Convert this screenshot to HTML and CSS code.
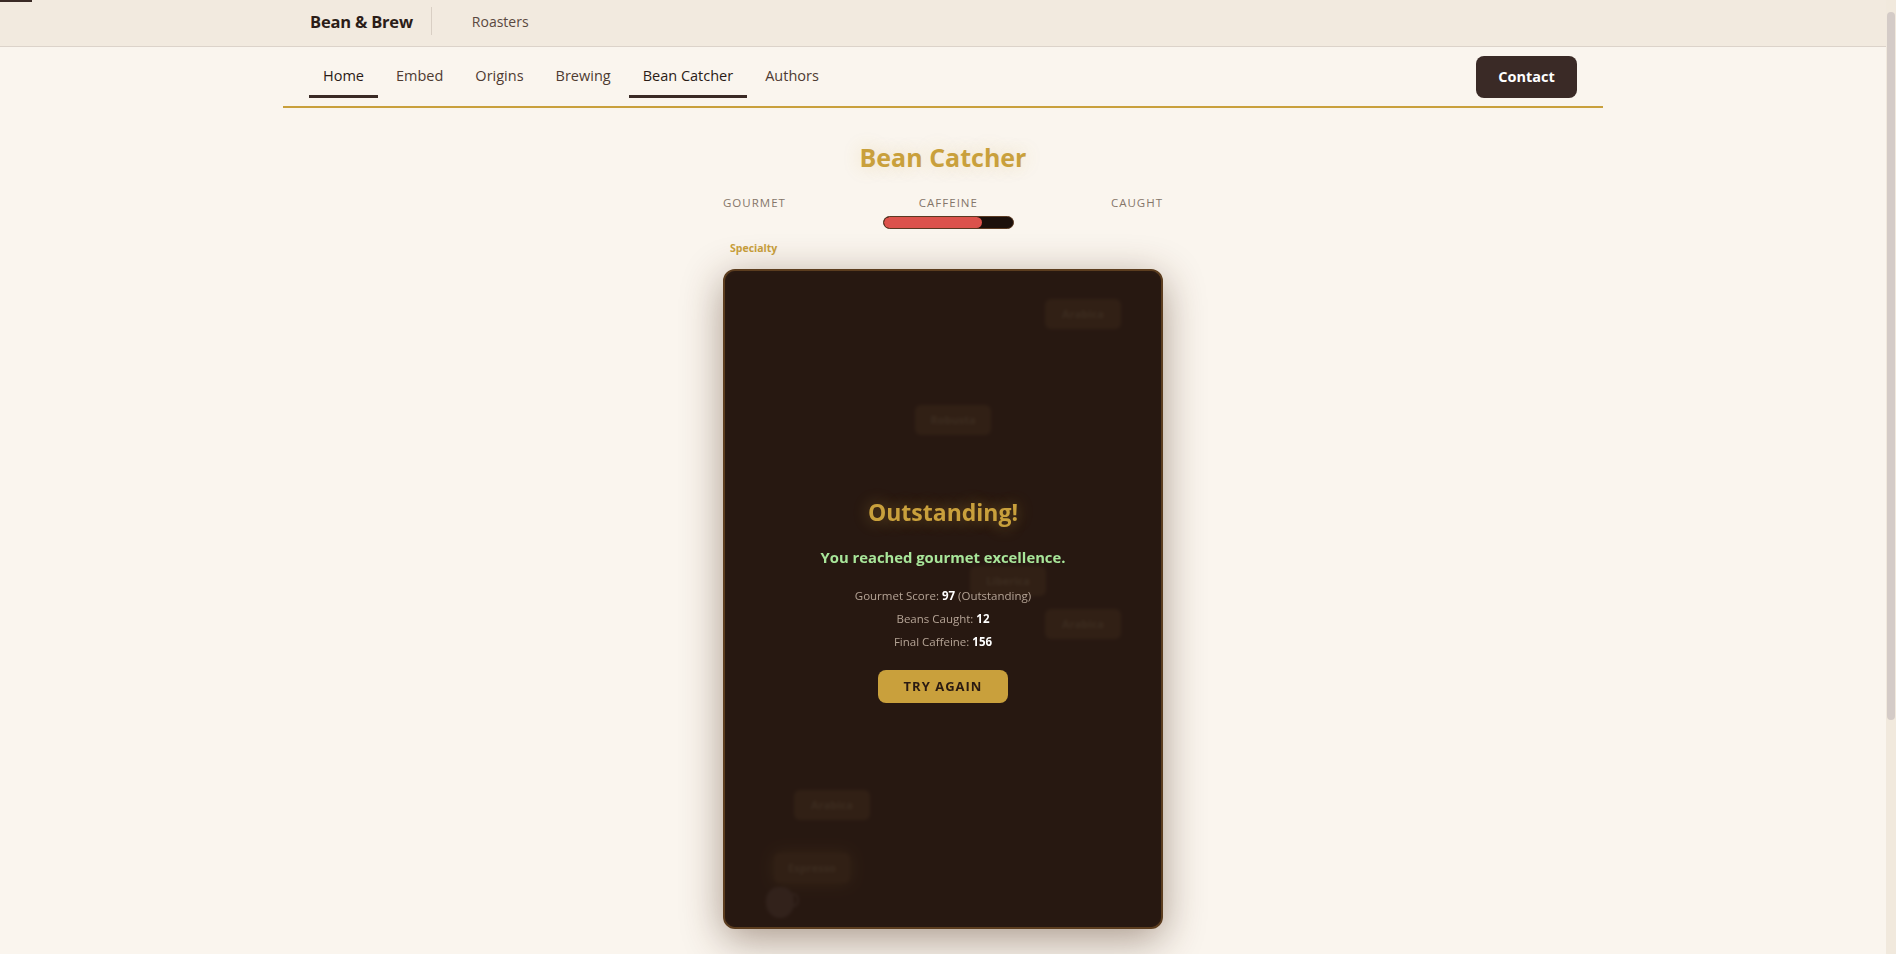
FILE: index.html
```html
<!DOCTYPE html>
<html lang="en">
<head>
    <meta charset="UTF-8">
    <title>Bean Catcher - Bean &amp; Brew</title>
    <link rel="stylesheet" href="styles.css">
</head>
<body>
    <div class="load-bar"></div>
    <div class="scrollbar"><div class="scrollbar-thumb"></div></div>

    <header class="topbar">
        <div class="topbar-inner">
            <span class="brand">Bean &amp; Brew</span>
            <span class="topbar-sep"></span>
            <span class="topbar-link">Roasters</span>
        </div>
    </header>

    <nav class="nav">
        <div class="nav-links">
            <a class="nav-link active">Home</a>
            <a class="nav-link">Embed</a>
            <a class="nav-link">Origins</a>
            <a class="nav-link">Brewing</a>
            <a class="nav-link active">Bean Catcher</a>
            <a class="nav-link">Authors</a>
        </div>
        <button class="contact-btn">Contact</button>
    </nav>

    <main class="game-page">
        <h1 class="game-title">Bean Catcher</h1>

        <div class="stats">
            <div class="stat">
                <div class="stat-label">Gourmet</div>
            </div>
            <div class="stat">
                <div class="stat-label">Caffeine</div>
                <div class="caffeine-bar"><div class="caffeine-fill" style="width: 76%"></div></div>
            </div>
            <div class="stat">
                <div class="stat-label">Caught</div>
            </div>
        </div>
        <div class="rank">Specialty</div>

        <div class="game">
            <div class="bean" style="left: 320px; top: 28px;">Arabica</div>
            <div class="bean" style="left: 190px; top: 134px;">Robusta</div>
            <div class="bean" style="left: 245px; top: 295px;">Liberica</div>
            <div class="bean" style="left: 320px; top: 338px;">Arabica</div>
            <div class="bean" style="left: 69px; top: 519px;">Arabica</div>
            <div class="bean bean-glow" style="left: 49px; top: 582px;">Espresso</div>
            <div class="cup" style="left: 41px; top: 616px;"></div>

            <div class="overlay">
                <h2 class="result-title">Outstanding!</h2>
                <p class="result-msg">You reached gourmet excellence.</p>
                <div class="result-lines">
                    <div>Gourmet Score: <b>97</b> (Outstanding)</div>
                    <div>Beans Caught: <b>12</b></div>
                    <div>Final Caffeine: <b>156</b></div>
                </div>
                <button class="retry-btn">Try Again</button>
            </div>
        </div>
    </main>
</body>
</html>
```

FILE: styles.css
```css
body {
    margin: 0;
    padding-right: 10px;
    font-family: "Open Sans", "Noto Sans", sans-serif;
    background: #faf5ee;
    color: #3a2a25;
}
.load-bar {
    position: fixed;
    top: 0;
    left: 0;
    width: 32px;
    height: 2px;
    background: #3a2a25;
    z-index: 10;
}
/* page scrollbar, drawn since the headless shot hides the native one */
.scrollbar {
    position: fixed;
    top: 0;
    right: 0;
    width: 10px;
    height: 100%;
    background: #f1e9dd;
    z-index: 10;
}
.scrollbar-thumb {
    margin: 12px 1px 0;
    height: 708px;
    border-radius: 4px;
    background: #d4cbc7;
}
.topbar {
    background: #f2eadf;
    border-bottom: 1px solid #dcd3ca;
    height: 46px;
}
.topbar-inner {
    width: 1320px;
    margin: 0 auto;
    height: 100%;
    display: flex;
    align-items: center;
    box-sizing: border-box;
    padding-left: 27px;
    padding-bottom: 4px;
}
.brand {
    font-size: 16.5px;
    font-weight: 700;
    color: #2c1d18;
    letter-spacing: -0.2px;
}
.topbar-sep {
    width: 1px;
    height: 28px;
    background: #d9cfc4;
    margin: 0 20px 0 18px;
}
.topbar-link {
    font-size: 14px;
    color: #5a4840;
    margin-left: 20px;
}
.nav {
    width: 1320px;
    margin: 0 auto;
    height: 61px;
    border-bottom: 2px solid #c9a03c;
    display: flex;
    align-items: center;
    justify-content: space-between;
    padding: 0 26px;
    box-sizing: border-box;
}
.nav-links {
    display: flex;
    gap: 4px;
    align-self: flex-end;
    margin-bottom: 8px;
}
.nav-link {
    padding: 9px 14px;
    line-height: 20px;
    font-size: 14.5px;
    color: #4e3b32;
    border-bottom: 3px solid transparent;
    cursor: pointer;
}
.nav-link.active {
    color: #2a1b16;
    border-bottom-color: #3a2a25;
}
.contact-btn {
    height: 42px;
    width: 101px;
    border: none;
    border-radius: 8px;
    background: #3a2a26;
    color: #fff;
    font-family: inherit;
    font-size: 14.5px;
    font-weight: 700;
}
.game-page {
    width: 440px;
    margin: 0 auto;
    padding-bottom: 360px;
}
.game-title {
    margin: 33px 0 0;
    text-align: center;
    font-size: 25px;
    line-height: 32px;
    font-weight: 700;
    color: #c9a03c;
    text-shadow: 0 0 18px rgba(201, 160, 60, 0.25);
}
.stats {
    display: flex;
    justify-content: space-between;
    margin-top: 22px;
}
.stat {
    display: flex;
    flex-direction: column;
    align-items: center;
}
.stat-label {
    font-size: 11.5px;
    line-height: 16px;
    letter-spacing: 1px;
    text-transform: uppercase;
    color: #85766a;
}
.caffeine-bar {
    width: 131px;
    height: 13px;
    margin-top: 5px;
    box-sizing: border-box;
    border: 1px solid #5a3a22;
    border-radius: 7px;
    background: #1c100b;
    overflow: hidden;
}
.caffeine-fill {
    height: 100%;
    background: #dc524b;
    border-radius: 6px;
}
.rank {
    margin-top: 12px;
    padding-left: 7px;
    font-size: 10.5px;
    line-height: 14px;
    font-weight: 700;
    color: #c9a03c;
}
.game {
    position: relative;
    margin-top: 14px;
    width: 440px;
    height: 660px;
    box-sizing: border-box;
    border: 2px solid #5c3d1f;
    border-radius: 12px;
    background: #281912;
    box-shadow: 0 10px 40px rgba(70, 40, 20, 0.45);
    overflow: hidden;
}
.bean {
    position: absolute;
    width: 76px;
    height: 30px;
    border-radius: 6px;
    background: #6a4e2c;
    color: #b09a70;
    font-size: 11px;
    font-weight: 700;
    line-height: 30px;
    text-align: center;
}
.bean-glow {
    box-shadow: 0 0 16px rgba(201, 160, 60, 0.6);
}
.cup {
    position: absolute;
    width: 28px;
    height: 31px;
    border-radius: 45% 45% 50% 50%;
    background: #6f5c58;
}
.cup::after {
    content: "";
    position: absolute;
    right: -5px;
    top: 6px;
    width: 7px;
    height: 10px;
    border: 2px solid #6f5c58;
    border-radius: 50%;
}
.overlay {
    position: absolute;
    inset: 0;
    background: rgba(40, 25, 18, 0.86);
    backdrop-filter: blur(1.5px);
    display: flex;
    flex-direction: column;
    align-items: center;
    justify-content: center;
    text-align: center;
}
.result-title {
    margin: 0;
    font-size: 23px;
    line-height: 32px;
    font-weight: 700;
    color: #c9a03c;
    text-shadow: 0 0 16px rgba(201, 160, 60, 0.45);
}
.result-msg {
    margin: 19px 0 0;
    font-size: 14.8px;
    line-height: 20px;
    font-weight: 700;
    color: #a8e69a;
}
.result-lines {
    margin-top: 17px;
    font-size: 11.5px;
    line-height: 23px;
    color: #b5a496;
}
.result-lines b {
    color: #fff;
}
.retry-btn {
    margin-top: 17px;
    width: 130px;
    height: 33px;
    border: none;
    border-radius: 8px;
    background: #c9a03c;
    color: #2a1a12;
    font-family: inherit;
    font-size: 13px;
    font-weight: 700;
    letter-spacing: 1px;
    text-transform: uppercase;
}
```
